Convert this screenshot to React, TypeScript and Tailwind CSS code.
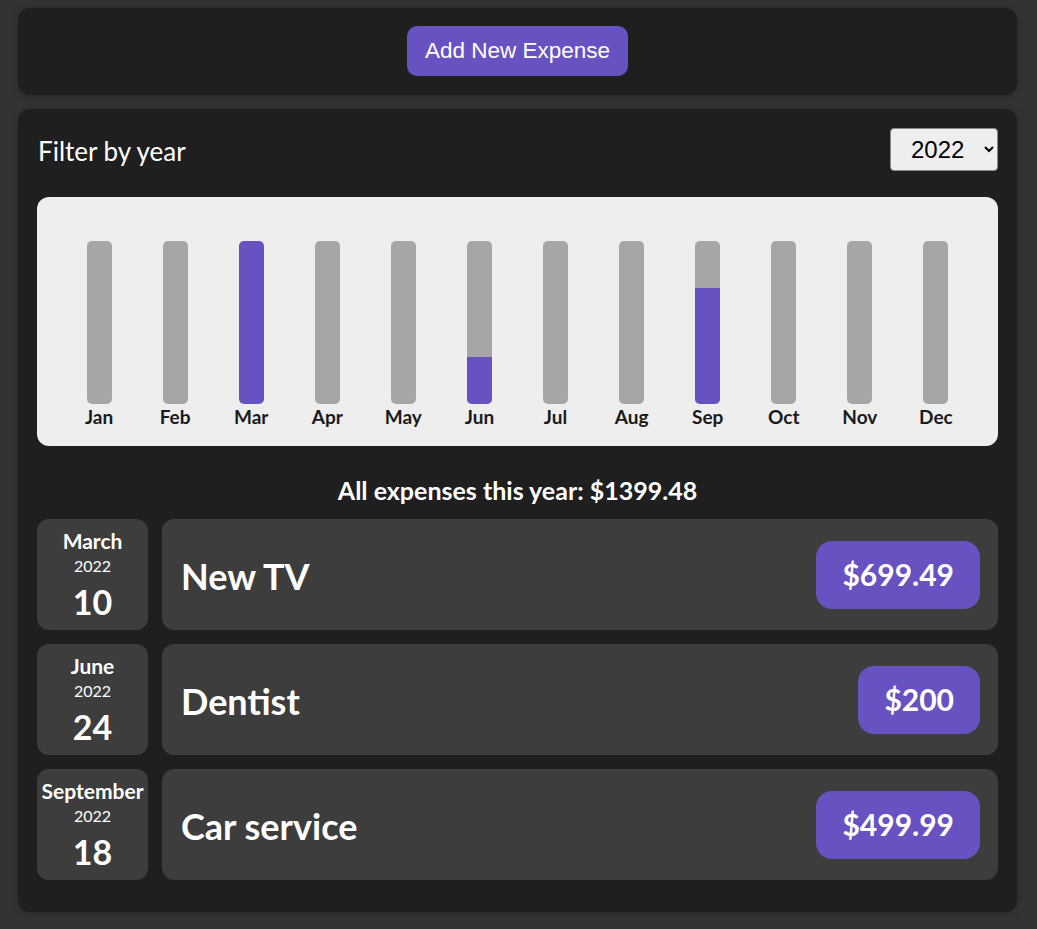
import React, { useState } from "react";

type Expense = {
  id: string;
  title: string;
  amount: number;
  date: Date;
};

const EXPENSES: Expense[] = [
  { id: "e1", title: "New TV", amount: 699.49, date: new Date(2022, 2, 10) },
  { id: "e2", title: "Dentist", amount: 200, date: new Date(2022, 5, 24) },
  { id: "e3", title: "Car service", amount: 499.99, date: new Date(2022, 8, 18) },
];

const MONTHS = ["Jan", "Feb", "Mar", "Apr", "May", "Jun", "Jul", "Aug", "Sep", "Oct", "Nov", "Dec"];
const MONTH_NAMES = [
  "January", "February", "March", "April", "May", "June",
  "July", "August", "September", "October", "November", "December",
];

const Chart = ({ expenses }: { expenses: Expense[] }) => {
  const values = MONTHS.map((_, i) =>
    expenses.filter((e) => e.date.getMonth() === i).reduce((s, e) => s + e.amount, 0)
  );
  const max = Math.max(...values);
  return (
    <div className="flex h-[249px] rounded-[12px] bg-[#eeeeee] px-[24px] pt-[44px]">
      {MONTHS.map((label, i) => {
        const fill = max > 0 ? Math.round((values[i] / max) * 100) : 0;
        return (
          <div key={label} className="flex flex-1 flex-col items-center">
            <div className="flex h-[163px] w-[25px] flex-col justify-end overflow-hidden rounded-[5px] bg-[#a6a6a6]">
              <div className="w-full bg-[#6852c1]" style={{ height: `${fill}%` }} />
            </div>
            <div className="text-[19px] font-bold leading-[26px] text-[#1a1a1a]">{label}</div>
          </div>
        );
      })}
    </div>
  );
};

const ExpenseDate = ({ date }: { date: Date }) => (
  <div className="flex h-[111px] w-[111px] shrink-0 flex-col items-center rounded-[12px] bg-[#3d3d3d] pt-[10px] text-white">
    <div className="text-[21px] font-bold leading-[24px]">{MONTH_NAMES[date.getMonth()]}</div>
    <div className="text-[16px] leading-[26px]">{date.getFullYear()}</div>
    <div className="text-[34px] font-bold leading-[46px]">{date.getDate()}</div>
  </div>
);

const ExpenseItem = ({ item }: { item: Expense }) => (
  <div className="flex gap-[14px]">
    <ExpenseDate date={item.date} />
    <div className="flex h-[111px] flex-1 items-center justify-between rounded-[12px] bg-[#3d3d3d] pl-[19px] pr-[18px]">
      <h2 className="pt-[3px] text-[36px] font-bold text-white">{item.title}</h2>
      <div className="flex h-[68px] items-center rounded-[16px] bg-[#6852c1] px-[26px] text-[30px] font-bold text-white">
        ${item.amount}
      </div>
    </div>
  </div>
);

export default function App() {
  const [year, setYear] = useState("2022");
  const filtered = EXPENSES.filter((e) => e.date.getFullYear().toString() === year);
  const total = filtered.reduce((s, e) => s + e.amount, 0);

  return (
    <div className="min-h-[929px] bg-[#333333] pt-[8px] pb-[17px] font-['Lato',sans-serif]">
      <div className="mx-[18px] w-[999px]">
        <div className="flex justify-center rounded-[12px] bg-[#1f1f1f] pt-[18px] pb-[19px] shadow-[0_1px_8px_rgba(0,0,0,0.25)]">
          <button className="h-[50px] rounded-[10px] bg-[#6852c1] px-[18px] font-['Liberation_Sans',Arial,sans-serif] text-[22.5px] text-white">
            Add New Expense
          </button>
        </div>

        <div className="mt-[14px] rounded-[12px] bg-[#1f1f1f] px-[19px] pt-[19px] pb-[32px] shadow-[0_1px_8px_rgba(0,0,0,0.25)]">
          <div className="mb-[26px] flex h-[43px] items-center justify-between">
            <label className="pl-[1px] pt-[3px] text-[26px] text-white">Filter by year</label>
            <select
              value={year}
              onChange={(e) => setYear(e.target.value)}
              className="h-[43px] w-[108px] rounded-[4px] border border-[#8a8a8a] bg-[#eeeeee] pl-[16px] font-['Liberation_Sans',Arial,sans-serif] text-[24px] text-black"
            >
              <option value="2022">2022</option>
              <option value="2021">2021</option>
              <option value="2020">2020</option>
              <option value="2019">2019</option>
            </select>
          </div>

          <Chart expenses={filtered} />

          <div className="mt-[30px] mb-[15px] text-center text-[25px] font-bold leading-[28px] text-white">
            All expenses this year: ${total.toFixed(2)}
          </div>

          <ul className="flex flex-col gap-[14px]">
            {filtered.map((item) => (
              <li key={item.id}>
                <ExpenseItem item={item} />
              </li>
            ))}
          </ul>
        </div>
      </div>
    </div>
  );
}
